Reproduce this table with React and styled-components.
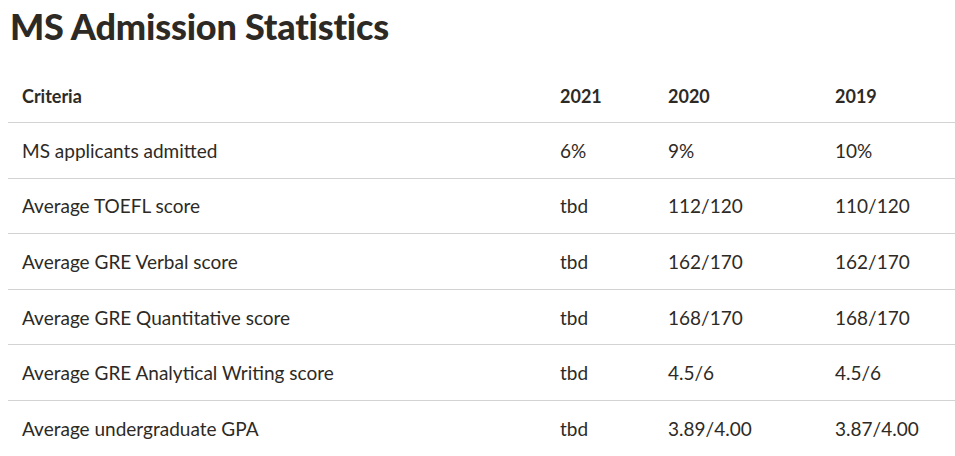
import React from 'react';
import styled, { createGlobalStyle } from 'styled-components';

const GlobalStyle = createGlobalStyle`
  body {
    margin: 0;
    background: #fff;
    font-family: Lato, "Open Sans", sans-serif;
    color: #2d2a26;
  }
`;

const Page = styled.div`
  padding: 5px 0 0 8px;
`;

const Title = styled.h2`
  margin: 0 0 22px 2px;
  font-size: 36px;
  line-height: 43px;
  font-weight: 900;
  color: #2d2a26;
  letter-spacing: -0.2px;
`;

const Table = styled.table`
  width: 947px;
  border-collapse: collapse;
  font-size: 19px;
  color: #2d2a26;
`;

const HeadCell = styled.th`
  text-align: left;
  font-weight: 700;
  font-size: 18px;
  padding: 14px 14px 15px;
  height: 23px;
  width: ${({ w }) => w}px;
  border-bottom: 1px solid #d3d3d3;
`;

const Cell = styled.td`
  padding: 0 14px;
  height: 54.6px;
  border-bottom: ${({ last }) => (last ? 'none' : '1px solid #d3d3d3')};
`;

const rows = [
  ['MS applicants admitted', '6%', '9%', '10%'],
  ['Average TOEFL score', 'tbd', '112/120', '110/120'],
  ['Average GRE Verbal score', 'tbd', '162/170', '162/170'],
  ['Average GRE Quantitative score', 'tbd', '168/170', '168/170'],
  ['Average GRE Analytical Writing score', 'tbd', '4.5/6', '4.5/6'],
  ['Average undergraduate GPA', 'tbd', '3.89/4.00', '3.87/4.00'],
];

export default function App() {
  return (
    <>
      <GlobalStyle />
      <Page>
        <Title>MS Admission Statistics</Title>
        <Table>
          <thead>
            <tr>
              <HeadCell w={510}>Criteria</HeadCell>
              <HeadCell w={80}>2021</HeadCell>
              <HeadCell w={139}>2020</HeadCell>
              <HeadCell w={106}>2019</HeadCell>
            </tr>
          </thead>
          <tbody>
            {rows.map((r, i) => (
              <tr key={r[0]}>
                {r.map((c, j) => (
                  <Cell key={j} last={i === rows.length - 1}>{c}</Cell>
                ))}
              </tr>
            ))}
          </tbody>
        </Table>
      </Page>
    </>
  );
}
